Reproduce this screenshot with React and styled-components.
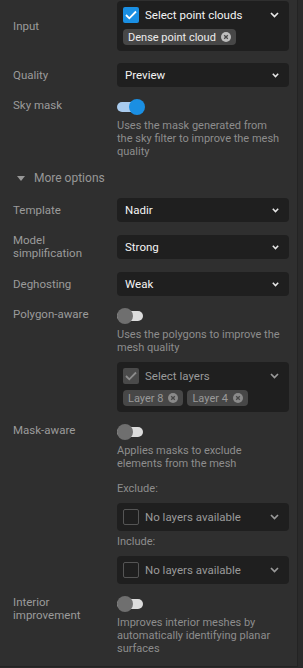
import React from 'react'
import styled, { createGlobalStyle } from 'styled-components'

const Global = createGlobalStyle`
  body {
    margin: 0;
    background: #2a2a2a;
    font-family: Roboto, "Liberation Sans", sans-serif;
  }
`

const Panel = styled.div`
  box-sizing: border-box;
  width: 298px;
  height: 667px;
  background: #2f2f2f;
  border-right: 1px solid #232323;
  border-bottom: 1px solid #232323;
  padding: 1px 8px 0 13px;
  display: flex;
  flex-direction: column;
`

const Row = styled.div`
  display: grid;
  grid-template-columns: 104px 172px;
  align-items: ${p => (p.$top ? 'start' : 'center')};
  margin-top: ${p => p.$mt || 0}px;
`

const Label = styled.div`
  font-size: 11.5px;
  line-height: 13px;
  color: #9b9b9b;
`

const Column = styled.div`
  display: flex;
  flex-direction: column;
`

const Select = styled.div`
  box-sizing: border-box;
  height: 24px;
  background: #1f1f1f;
  border-radius: 4px;
  padding: 0 10px 0 8px;
  display: flex;
  align-items: center;
  justify-content: space-between;
  color: #f4f4f4;
  font-size: 11.5px;
`

const MultiBox = styled.div`
  box-sizing: border-box;
  background: #1f1f1f;
  border-radius: 4px;
  padding: 6px 10px 6px 6px;
  display: flex;
  flex-direction: column;
  gap: 6px;
  margin-top: ${p => p.$mt || 0}px;
  height: ${p => (p.$short ? '28px' : 'auto')};
  justify-content: center;
`

const BoxHead = styled.div`
  display: flex;
  align-items: center;
  gap: 6px;
  font-size: 11.5px;
  color: ${p => (p.$dim ? '#9a9a9a' : '#f4f4f4')};
`

const Grow = styled.span`
  flex: 1;
`

const Check = styled.span`
  box-sizing: border-box;
  width: 16px;
  height: 16px;
  border-radius: 2px;
  display: flex;
  align-items: center;
  justify-content: center;
  flex-shrink: 0;
  background: ${p => (p.$state === 'on' ? '#1a8fe3' : p.$state === 'dim' ? '#4a4a4a' : 'transparent')};
  border: ${p => (p.$state === 'empty' ? '1.5px solid #555' : 'none')};
`

const Chips = styled.div`
  display: flex;
  gap: 4px;
`

const Chip = styled.span`
  height: 16px;
  box-sizing: border-box;
  padding: 0 5px;
  border-radius: 4px;
  background: #474747;
  display: inline-flex;
  align-items: center;
  gap: 5px;
  font-size: 11px;
  color: ${p => (p.$dim ? '#9a9a9a' : '#ececec')};
`

const Track = styled.div`
  position: relative;
  width: 28px;
  height: 16px;
`

const TrackBar = styled.div`
  position: absolute;
  left: 0;
  top: 3px;
  width: 26px;
  height: 10px;
  border-radius: 5px;
  background: ${p => (p.$on ? '#a9cbee' : '#dcdcdc')};
`

const Knob = styled.div`
  position: absolute;
  top: 0;
  left: ${p => (p.$on ? 12 : 0)}px;
  width: 16px;
  height: 16px;
  border-radius: 50%;
  background: ${p => (p.$on ? '#1a8fe3' : '#6f6f6f')};
`

const Desc = styled.div`
  margin-top: 4px;
  max-width: 166px;
  font-size: 11px;
  line-height: 13px;
  color: #8d8d8d;
`

const SubLabel = styled.div`
  margin-top: ${p => p.$mt}px;
  font-size: 11px;
  line-height: 13px;
  color: #8d8d8d;
`

const More = styled.div`
  margin-top: 12px;
  height: 16px;
  display: flex;
  align-items: center;
  gap: 9px;
  padding-left: 4px;
  font-size: 12px;
  color: #979797;
`

const Chevron = ({ big, color = '#e8e8e8' }) =>
  big ? (
    <svg width="9" height="6" viewBox="0 0 9 6">
      <polyline points="1,1 4.5,4.5 8,1" fill="none" stroke={color} strokeWidth="1.7" />
    </svg>
  ) : (
    <svg width="7" height="5" viewBox="0 0 7 5">
      <polyline points="0.8,0.8 3.5,3.6 6.2,0.8" fill="none" stroke={color} strokeWidth="1.5" />
    </svg>
  )

const Tick = ({ color }) => (
  <svg width="12" height="10" viewBox="0 0 12 10">
    <polyline points="1,5 4.3,8.3 11,1.5" fill="none" stroke={color} strokeWidth="1.8" />
  </svg>
)

const Close = ({ dim }) => (
  <svg width="10" height="10" viewBox="0 0 10 10">
    <circle cx="5" cy="5" r="5" fill={dim ? '#8a8a8a' : '#bdbdbd'} />
    <path d="M3.2 3.2 L6.8 6.8 M6.8 3.2 L3.2 6.8" stroke="#474747" strokeWidth="1.3" />
  </svg>
)

const Toggle = ({ on }) => (
  <Track>
    <TrackBar $on={on} />
    <Knob $on={on} />
  </Track>
)

const Dropdown = ({ label, value, mt }) => (
  <Row $mt={mt}>
    <Label>{label}</Label>
    <Select>
      {value}
      <Chevron />
    </Select>
  </Row>
)

const EmptyBox = ({ mt }) => (
  <MultiBox $short $mt={mt}>
    <BoxHead $dim>
      <Check $state="empty" />
      <Grow>No layers available</Grow>
      <Chevron big color="#9a9a9a" />
    </BoxHead>
  </MultiBox>
)

export default function App() {
  return (
    <Panel>
      <Global />
      <Row>
        <Label>Input</Label>
        <MultiBox>
          <BoxHead>
            <Check $state="on">
              <Tick color="#fff" />
            </Check>
            <Grow>Select point clouds</Grow>
            <Chevron big />
          </BoxHead>
          <Chips>
            <Chip>
              Dense point cloud
              <Close />
            </Chip>
          </Chips>
        </MultiBox>
      </Row>
      <Dropdown label="Quality" value="Preview" mt={12} />
      <Row $top $mt={12}>
        <Label>Sky mask</Label>
        <Column>
          <Toggle on />
          <Desc>Uses the mask generated from the sky filter to improve the mesh quality</Desc>
        </Column>
      </Row>
      <More>
        <svg width="8" height="5" viewBox="0 0 8 5">
          <polygon points="0,0 8,0 4,5" fill="#979797" />
        </svg>
        More options
      </More>
      <Dropdown label="Template" value="Nadir" mt={12} />
      <Dropdown label={<>Model<br />simplification</>} value="Strong" mt={12} />
      <Dropdown label="Deghosting" value="Weak" mt={12} />
      <Row $top $mt={12}>
        <Label>Polygon-aware</Label>
        <Column>
          <Toggle />
          <Desc>Uses the polygons to improve the mesh quality</Desc>
          <MultiBox $mt={8}>
            <BoxHead $dim>
              <Check $state="dim">
                <Tick color="#8c8c8c" />
              </Check>
              <Grow>Select layers</Grow>
              <Chevron big color="#9a9a9a" />
            </BoxHead>
            <Chips>
              <Chip $dim>
                Layer 8
                <Close dim />
              </Chip>
              <Chip $dim>
                Layer 4
                <Close dim />
              </Chip>
            </Chips>
          </MultiBox>
        </Column>
      </Row>
      <Row $top $mt={12}>
        <Label>Mask-aware</Label>
        <Column>
          <Toggle />
          <Desc>Applies masks to exclude elements from the mesh</Desc>
          <SubLabel $mt={12}>Exclude:</SubLabel>
          <EmptyBox mt={8} />
          <SubLabel $mt={4}>Include:</SubLabel>
          <EmptyBox mt={8} />
        </Column>
      </Row>
      <Row $top $mt={12}>
        <Label>
          Interior
          <br />
          improvement
        </Label>
        <Column>
          <Toggle />
          <Desc>Improves interior meshes by automatically identifying planar surfaces</Desc>
        </Column>
      </Row>
    </Panel>
  )
}
